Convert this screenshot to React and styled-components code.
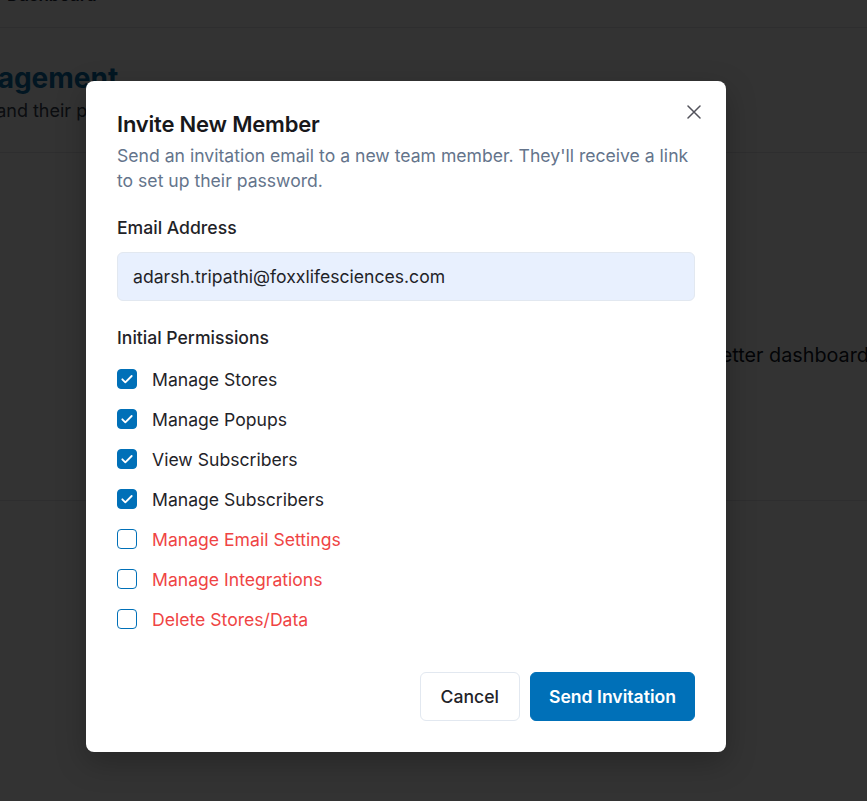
import styled, { createGlobalStyle } from "styled-components";

const GlobalStyle = createGlobalStyle`
  html, body {
    margin: 0;
    padding: 0;
    background: #ffffff;
    font-family: Inter, "Noto Sans", sans-serif;
    color: #1f2328;
  }
  * { box-sizing: border-box; }
`;

const Screen = styled.div`
  position: relative;
  width: 867px;
  height: 801px;
  overflow: hidden;
  background: #ffffff;
`;

const Page = styled.div`
  display: flex;
  flex-direction: column;
  width: 1400px;
  margin-left: -144px;
  margin-top: -13px;
`;

const TopBar = styled.header`
  height: 41px;
  padding: 0 0 0 151px;
  display: flex;
  align-items: flex-start;
  border-bottom: 1px solid #e5e7eb;
  font-size: 17px;
  line-height: 16px;
  font-weight: 600;
  color: #1f2937;
`;

const PageHeader = styled.section`
  padding: 32px 0 0 0;
  height: 125px;
  border-bottom: 1px solid #e5e7eb;
`;

const PageTitle = styled.h1`
  margin: 0;
  font-size: 28px;
  font-weight: 700;
  line-height: 36px;
  color: #0a6fa8;
`;

const PageSubtitle = styled.p`
  margin: 4px 0 0;
  font-size: 18px;
  color: #374151;
`;

const PageBody = styled.section`
  height: 348px;
  padding-top: 188px;
  border-bottom: 1px solid #e5e7eb;
`;

const EmptyText = styled.p`
  margin: 0 0 0 649px;
  font-size: 19.8px;
  line-height: 28px;
  color: #111827;
  white-space: nowrap;
`;

const Overlay = styled.div`
  position: absolute;
  inset: 0;
  background: rgba(0, 0, 0, 0.8);
  display: flex;
  align-items: flex-start;
  justify-content: flex-start;
  padding: 81px 0 0 86px;
`;

const Dialog = styled.div`
  position: relative;
  width: 640px;
  background: #ffffff;
  border-radius: 8px;
  padding: 28px 31px 31px;
  box-shadow: 0 10px 30px rgba(0, 0, 0, 0.25);
  display: flex;
  flex-direction: column;
`;

const CloseButton = styled.button`
  position: absolute;
  top: 21px;
  right: 22px;
  width: 20px;
  height: 20px;
  padding: 0;
  border: none;
  background: transparent;
  color: #52525b;
  display: flex;
  align-items: center;
  justify-content: center;
  cursor: pointer;
`;

const Title = styled.h2`
  margin: 0;
  font-size: 22px;
  line-height: 30px;
  font-weight: 600;
  color: #18181b;
  letter-spacing: -0.2px;
`;

const Description = styled.p`
  margin: 4px 0 0;
  font-size: 17.6px;
  line-height: 25px;
  color: #64748b;
`;

const Label = styled.div`
  margin-top: ${(p) => p.$top}px;
  font-size: 17.6px;
  line-height: 26px;
  font-weight: 500;
  color: #1f2328;
`;

const Input = styled.input`
  margin-top: 11px;
  width: 100%;
  height: 49px;
  padding: 0 15px;
  border: 1px solid #e2e8f0;
  border-radius: 6px;
  background: #e8f0fe;
  font-family: inherit;
  font-size: 17.6px;
  color: #1f2328;
  outline: none;
`;

const PermissionList = styled.div`
  margin-top: 15px;
  display: flex;
  flex-direction: column;
  gap: 14px;
`;

const PermissionRow = styled.label`
  display: flex;
  align-items: center;
  gap: 15px;
  height: 26px;
  font-size: 17.6px;
  color: ${(p) => (p.$danger ? "#ef4444" : "#1f2328")};
`;

const Box = styled.span`
  width: 20px;
  height: 20px;
  flex: none;
  border-radius: 4px;
  border: 1.5px solid #0070b8;
  background: ${(p) => (p.$checked ? "#0070b8" : "#ffffff")};
  display: flex;
  align-items: center;
  justify-content: center;
`;

const Footer = styled.div`
  margin-top: 40px;
  display: flex;
  justify-content: flex-end;
  gap: 10px;
`;

const Button = styled.button`
  height: 49px;
  padding: 0 ${(p) => (p.$primary ? 18 : 20)}px;
  border-radius: 6px;
  font-family: inherit;
  font-size: 17.6px;
  font-weight: ${(p) => (p.$primary ? 600 : 500)};
  border: 1px solid ${(p) => (p.$primary ? "#0070b8" : "#e2e8f0")};
  background: ${(p) => (p.$primary ? "#0070b8" : "#ffffff")};
  color: ${(p) => (p.$primary ? "#ffffff" : "#1f2328")};
  cursor: pointer;
`;

const permissions = [
  { label: "Manage Stores", checked: true },
  { label: "Manage Popups", checked: true },
  { label: "View Subscribers", checked: true },
  { label: "Manage Subscribers", checked: true },
  { label: "Manage Email Settings", checked: false, danger: true },
  { label: "Manage Integrations", checked: false, danger: true },
  { label: "Delete Stores/Data", checked: false, danger: true },
];

const Check = () => (
  <svg width="16" height="16" viewBox="0 0 24 24" fill="none" stroke="#fff" strokeWidth="2.8" strokeLinecap="round" strokeLinejoin="round">
    <path d="M5 12.5l4.5 4.5L19 7.5" />
  </svg>
);

const App = () => {
  return (
    <Screen>
      <GlobalStyle />
      <Page>
        <TopBar>Dashboard</TopBar>
        <PageHeader>
          <PageTitle>Team Management</PageTitle>
          <PageSubtitle>Manage admins and their permissions</PageSubtitle>
        </PageHeader>
        <PageBody>
          <EmptyText>Invite your team for a better dashboard experience</EmptyText>
        </PageBody>
      </Page>
      <Overlay>
        <Dialog>
          <CloseButton aria-label="Close">
            <svg width="14" height="14" viewBox="0 0 14 14" fill="none" stroke="currentColor" strokeWidth="1.5" strokeLinecap="round">
              <path d="M1 1l12 12M13 1L1 13" />
            </svg>
          </CloseButton>
          <Title>Invite New Member</Title>
          <Description>
            Send an invitation email to a new team member. They'll receive a link
            to set up their password.
          </Description>
          <Label $top={22}>Email Address</Label>
          <Input type="email" defaultValue="adarsh.tripathi@foxxlifesciences.com" />
          <Label $top={24}>Initial Permissions</Label>
          <PermissionList>
            {permissions.map((p) => (
              <PermissionRow key={p.label} $danger={p.danger}>
                <Box $checked={p.checked}>{p.checked && <Check />}</Box>
                {p.label}
              </PermissionRow>
            ))}
          </PermissionList>
          <Footer>
            <Button>Cancel</Button>
            <Button $primary>Send Invitation</Button>
          </Footer>
        </Dialog>
      </Overlay>
    </Screen>
  );
};

export default App;
